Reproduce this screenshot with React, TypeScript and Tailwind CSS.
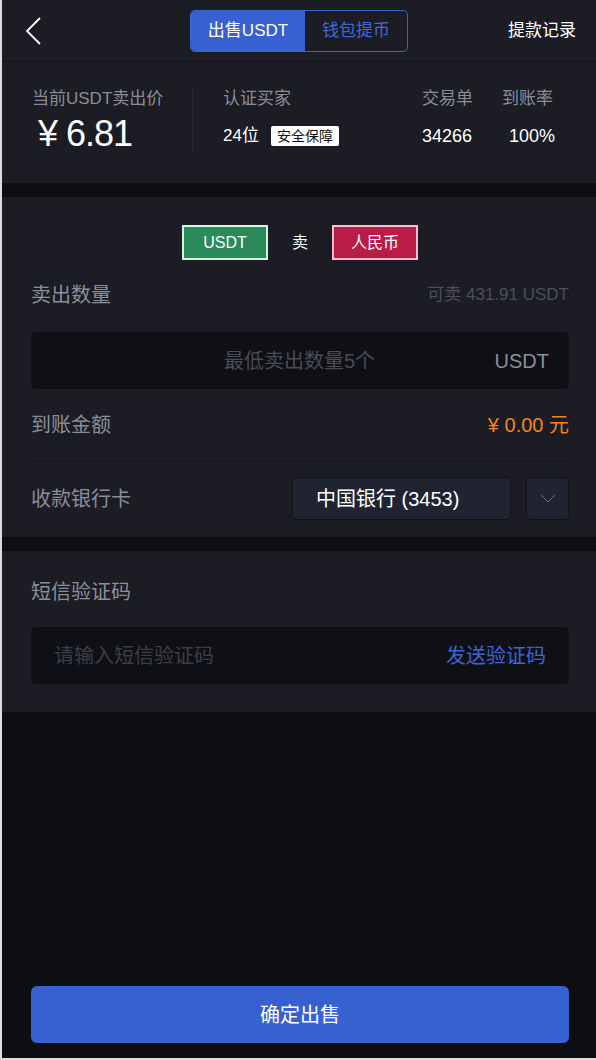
import React from "react";

const font = { fontFamily: '"Liberation Sans", "Noto Sans CJK SC", sans-serif' };

export default function App() {
  return (
    <div
      className="w-[596px] h-[1060px] bg-[#0d0e13] flex flex-col border-l-2 border-b-2 border-[#dcdcdc] overflow-hidden"
      style={font}
    >
      {/* Header */}
      <div className="h-[62px] bg-[#1b1c24] border-b border-[#121319] flex items-center shrink-0">
        <div className="pl-[23px] w-[120px]">
          <svg width="18" height="30" viewBox="0 0 18 30" fill="none">
            <path d="M15 2 L2 15 L15 28" stroke="#ffffff" strokeWidth="1.8" />
          </svg>
        </div>
        <div className="flex-1 flex justify-center">
          <div className="flex h-[42px] border border-[#3a63d0] rounded-[5px] overflow-hidden">
            <div className="w-[114px] bg-[#3761d0] text-white text-[17px] flex items-center justify-center">
              出售USDT
            </div>
            <div className="w-[102px] text-[#3d68d8] text-[17px] flex items-center justify-center">
              钱包提币
            </div>
          </div>
        </div>
        <div className="w-[120px] text-right pr-[20px] text-white text-[17px]">提款记录</div>
      </div>

      {/* Stats */}
      <div className="h-[121px] bg-[#1b1c24] flex items-start pt-[26px] shrink-0">
        <div className="w-[191px] pl-[30px] border-r border-[#272833] h-[64px] flex flex-col">
          <div className="text-[#8a8d99] text-[17px] leading-[22px]">当前USDT卖出价</div>
          <div className="text-white text-[36px] leading-[40px] mt-[4px] pl-[6px] tracking-[-1px]">¥ 6.81</div>
        </div>
        <div className="pl-[30px] w-[229px] flex flex-col">
          <div className="text-[#8a8d99] text-[17px] leading-[22px]">认证买家</div>
          <div className="flex items-center mt-[15px]">
            <span className="text-white text-[17px] leading-[22px]">24位</span>
            <span className="ml-[12px] bg-white text-[#111] text-[14px] leading-[20px] px-[6px] rounded-[2px]">安全保障</span>
          </div>
        </div>
        <div className="w-[80px] flex flex-col">
          <div className="text-[#8a8d99] text-[17px] leading-[22px]">交易单</div>
          <div className="text-white text-[18px] leading-[22px] mt-[15px]">34266</div>
        </div>
        <div className="flex flex-col">
          <div className="text-[#8a8d99] text-[17px] leading-[22px]">到账率</div>
          <div className="text-white text-[18px] leading-[22px] mt-[15px] pl-[7px]">100%</div>
        </div>
      </div>

      <div className="h-[14px] shrink-0" />

      {/* Form */}
      <div className="bg-[#1b1c24] pl-[29px] pr-[27px] pt-[28px] h-[340px] shrink-0">
        <div className="flex items-center justify-center">
          <div className="w-[86px] h-[35px] bg-[#2a8a5a] border-2 border-[#d2f7dc] text-white text-[16px] flex items-center justify-center">
            USDT
          </div>
          <div className="w-[64px] text-center text-white text-[16px]">卖</div>
          <div className="w-[86px] h-[35px] bg-[#b91d47] border-2 border-[#f9bccb] text-white text-[16px] flex items-center justify-center">
            人民币
          </div>
        </div>
        <div className="flex items-center justify-between mt-[20px] h-[30px]">
          <span className="text-[#8b8e9a] text-[20px]">卖出数量</span>
          <span className="text-[#4c4f5a] text-[17px]">可卖 431.91 USDT</span>
        </div>
        <div className="mt-[22px] h-[57px] bg-[#0f1015] rounded-[5px] flex items-center relative">
          <span className="absolute left-[193px] text-[#494c56] text-[20px]">最低卖出数量5个</span>
          <span className="ml-auto mr-[20px] text-[#8b8e9a] text-[20px]">USDT</span>
        </div>
        <div className="flex items-center justify-between h-[73px] border-b border-[#15161c]">
          <span className="text-[#8b8e9a] text-[20px]">到账金额</span>
          <span className="text-[#f5841f] text-[20px]">¥ 0.00 元</span>
        </div>
        <div className="flex items-center h-[73px]">
          <span className="text-[#8b8e9a] text-[20px]">收款银行卡</span>
          <div className="ml-auto w-[219px] h-[43px] bg-[#202431] border border-[#111218] rounded-[4px] flex items-center pl-[23px] text-white text-[20px]">
            中国银行 (3453)
          </div>
          <div className="ml-[15px] w-[43px] h-[43px] bg-[#202431] border border-[#111218] rounded-[4px] flex items-center justify-center">
            <svg width="16" height="10" viewBox="0 0 16 10" fill="none">
              <path d="M1 1 L8 8 L15 1" stroke="#6f7382" strokeWidth="1" />
            </svg>
          </div>
        </div>
      </div>

      <div className="h-[14px] shrink-0" />

      {/* SMS */}
      <div className="bg-[#1b1c24] pl-[29px] pr-[27px] pt-[26px] h-[161px] shrink-0">
        <div className="text-[#8b8e9a] text-[20px] h-[30px] flex items-center">短信验证码</div>
        <div className="mt-[20px] h-[57px] bg-[#0f1015] rounded-[5px] flex items-center px-[23px]">
          <span className="text-[#3b3e48] text-[20px]">请输入短信验证码</span>
          <span className="ml-auto text-[#3a66d6] text-[20px]">发送验证码</span>
        </div>
      </div>

      <div className="flex-1" />

      <div className="pl-[29px] pr-[27px] pb-[15px]">
        <div className="h-[57px] bg-[#3761d0] rounded-[6px] flex items-center justify-center text-white text-[20px]">
          确定出售
        </div>
      </div>
    </div>
  );
}
